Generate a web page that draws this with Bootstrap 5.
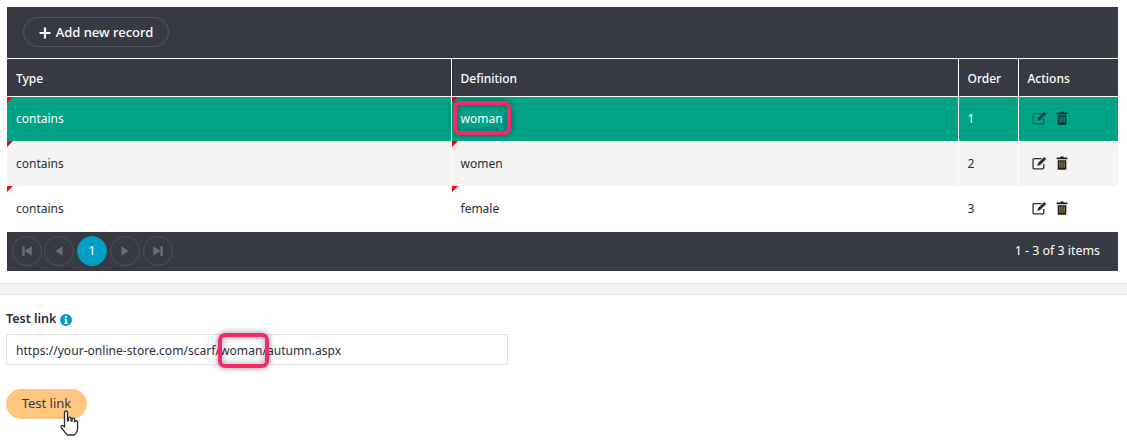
<!DOCTYPE html>
<html lang="en">
<head>
<meta charset="utf-8">
<title>Test link</title>
<link rel="stylesheet" href="https://cdn.jsdelivr.net/npm/bootstrap@5.3.0/dist/css/bootstrap.min.css">
<style>
html,body{height:442px;overflow:hidden;background:#fff}
body{font-family:"Noto Sans","Open Sans",sans-serif;font-size:12px;color:#2b2e36;position:relative}
.grid-wrap{margin:7px 9px 0 7px}
.grid-top{background:#373a42;height:51px;padding:10px 16px}
.add-btn{height:30px;width:146px;border:1px solid #54575e;border-radius:15px;color:#fff;font-size:13px;font-weight:500;padding:2px 0 0;background:transparent;display:flex;align-items:center;justify-content:center;gap:5px}
.grid-table{table-layout:fixed;width:100%;margin:0;border-collapse:collapse}
.grid-table th,.grid-table td{padding:0 0 0 9px;font-size:12px;vertical-align:middle;border:0;border-left:1px solid #fff;position:relative;box-shadow:none}
.grid-table th:first-child,.grid-table td:first-child{border-left:0}
.grid-table th{background:#373a42;color:#fff;font-weight:500;height:38px;padding-top:3px;border-top:1px solid #fff;border-bottom:1px solid #fff}
.grid-table td{height:45px;padding-top:1px;color:#2b2e36;background:#fff}
.grid-table tr.row-on td{background:#00a386;color:#fff;height:44px;padding-top:0}
.grid-table tr.row-alt td{background:#f4f4f4}
.dirty::before{content:"";position:absolute;left:0;top:0;border-style:solid;border-width:6px 6px 0 0;border-color:#f00 transparent transparent transparent}
.act-cell{display:flex;gap:8px;padding-left:4px;align-items:center;margin-top:-2px}
.grid-pager{background:#373a42;height:39px;margin-top:1px;padding:0 18px 0 5px;display:flex;align-items:center;justify-content:space-between;color:#fff;font-size:12.4px}
.pg-dot{width:30px;height:30px;border-radius:50%;border:1px solid #4e5158;display:flex;align-items:center;justify-content:center;color:#fff;font-size:13px;flex:none}
.pg-dot.pg-on{background:#00a0c6;border-color:#00a0c6}
.pg-row{display:flex;gap:3px}
.pg-row .pg-dot:first-child{margin-right:-1px}
.band{height:12px;background:#f4f4f4;border-top:1px solid #e6e6e6;border-bottom:1px solid #e6e6e6;margin-top:12px}
.form-zone{padding:16px 6px 0}
.lbl{font-size:12.5px;font-weight:600;display:flex;align-items:center;gap:4px;height:18px;margin-bottom:5px;color:#2b2e36}
.url-box{width:502px;height:31px;border:1px solid #e2e2e2;border-radius:0;font-size:12.1px;padding:2px 9px 0;color:#2b2e36;box-shadow:none}
.go-btn{margin-top:24px;width:81px;height:30px;border-radius:15px;background:#ffc680;border:0;font-size:13px;color:#373a42;padding:0}
.mark-box{position:absolute;border:4px solid #f5286a;border-radius:7px;box-shadow:0 0 6px rgba(0,0,0,.45),inset 0 0 7px rgba(0,0,0,.35)}
.mark-a{left:453px;top:101px;width:58px;height:34px}
.mark-b{left:218px;top:333px;width:51px;height:35px}
.hand{position:absolute;left:60px;top:410px}
</style>
</head>
<body>
<div class="grid-wrap">
  <div class="grid-top">
    <button type="button" class="btn add-btn"><svg width="12" height="12" viewBox="0 0 12 12"><path d="M6 .5v11M.5 6h11" stroke="#fff" stroke-width="2.200"/></svg>Add new record</button>
  </div>
  <table class="table grid-table">
    <colgroup><col style="width:444px"><col style="width:507px"><col style="width:60px"><col></colgroup>
    <thead><tr><th>Type</th><th>Definition</th><th>Order</th><th>Actions</th></tr></thead>
    <tbody>
      <tr class="row-on"><td class="dirty">contains</td><td class="dirty">woman</td><td>1</td><td><div class="act-cell">
        <svg width="16" height="14" viewBox="0 0 15 13"><path d="M11 7.500V11a1 1 0 0 1-1 1H2a1 1 0 0 1-1-1V3.500a1 1 0 0 1 1-1h7" fill="none" stroke="#0a6b50" stroke-width="1.200"/><path d="M5 9l.6-2.400L11.500 .8l1.900 1.900L7.400 8.500z" fill="#1d3a38"/></svg>
        <svg width="12" height="14" viewBox="0 0 11 13"><path d="M4 .5h3v1h3.500v1.500H.5V1.500H4zM1.500 4h8v8a.8.8 0 0 1-.8.8H2.300a.8.8 0 0 1-.8-.8z" fill="#10302e"/><path d="M3.500 5v6M5.500 5v6M7.500 5v6" stroke="#00a386"/></svg>
      </div></td></tr>
      <tr class="row-alt"><td class="dirty">contains</td><td class="dirty">women</td><td>2</td><td><div class="act-cell">
        <svg width="16" height="14" viewBox="0 0 15 13"><path d="M11 7.500V11a1 1 0 0 1-1 1H2a1 1 0 0 1-1-1V3.500a1 1 0 0 1 1-1h7" fill="none" stroke="#2b2e36" stroke-width="1.200"/><path d="M5 9l.6-2.400L11.500 .8l1.900 1.900L7.400 8.500z" fill="#2b2e36"/></svg>
        <svg width="12" height="14" viewBox="0 0 11 13"><path d="M4 .5h3v1h3.500v1.500H.5V1.500H4zM1.500 4h8v8a.8.8 0 0 1-.8.8H2.300a.8.8 0 0 1-.8-.8z" fill="#1b1d22"/><path d="M3.500 5v6M5.500 5v6M7.500 5v6" stroke="#b08a55"/></svg>
      </div></td></tr>
      <tr><td class="dirty">contains</td><td class="dirty">female</td><td>3</td><td><div class="act-cell">
        <svg width="16" height="14" viewBox="0 0 15 13"><path d="M11 7.500V11a1 1 0 0 1-1 1H2a1 1 0 0 1-1-1V3.500a1 1 0 0 1 1-1h7" fill="none" stroke="#2b2e36" stroke-width="1.200"/><path d="M5 9l.6-2.400L11.500 .8l1.900 1.900L7.400 8.500z" fill="#2b2e36"/></svg>
        <svg width="12" height="14" viewBox="0 0 11 13"><path d="M4 .5h3v1h3.500v1.500H.5V1.500H4zM1.500 4h8v8a.8.8 0 0 1-.8.8H2.300a.8.8 0 0 1-.8-.8z" fill="#1b1d22"/><path d="M3.500 5v6M5.500 5v6M7.500 5v6" stroke="#b08a55"/></svg>
      </div></td></tr>
    </tbody>
  </table>
  <div class="grid-pager">
    <div class="pg-row">
      <span class="pg-dot"><svg width="12" height="12" viewBox="0 0 10 10"><path d="M1 1h2v8H1zM9 1v8L3 5z" fill="#6b6e74"/></svg></span>
      <span class="pg-dot"><svg width="12" height="12" viewBox="0 0 10 10"><path d="M8 1v8L2 5z" fill="#6b6e74"/></svg></span>
      <span class="pg-dot pg-on">1</span>
      <span class="pg-dot"><svg width="12" height="12" viewBox="0 0 10 10"><path d="M2 1v8l6-4z" fill="#6b6e74"/></svg></span>
      <span class="pg-dot"><svg width="12" height="12" viewBox="0 0 10 10"><path d="M7 1h2v8H7zM1 1v8l6-4z" fill="#6b6e74"/></svg></span>
    </div>
    <span>1 - 3 of 3 items</span>
  </div>
</div>
<div class="band"></div>
<div class="form-zone">
  <div class="lbl">Test link <svg width="12" height="12" viewBox="0 0 12 12"><circle cx="6" cy="6" r="6" fill="#00a0c6"/><path d="M5 2.200h2v1.800H5zM4.500 5h2.500v3.800h.8V10H4.300V8.800h.9V6.200h-.7z" fill="#fff"/></svg></div>
  <input type="text" class="form-control url-box" value="https://your-online-store.com/scarf/woman/autumn.aspx" aria-label="Test link">
  <button type="button" class="btn go-btn d-block">Test link</button>
</div>
<div class="mark-box mark-a"></div>
<div class="mark-box mark-b"></div>
<svg class="hand" width="20" height="28" viewBox="0 0 20 28"><path d="M4.500 2.500a1.500 1.500 0 0 1 3 0V11l1-.3V8.500a1.300 1.300 0 0 1 2.600 0v2.700l.9 0V9.500a1.300 1.300 0 0 1 2.600 0v2l.7 0a1.200 1.200 0 0 1 2.300.5v6c0 3-2 6-3.500 7H7.500C5 23 3 19.500 1.300 17.500c-.8-1.500.6-2.800 2-1.800l1.200 1.300z" fill="#fff" stroke="#2b2e36" stroke-width="1.300" stroke-linejoin="round"/></svg>
<script src="https://cdn.jsdelivr.net/npm/bootstrap@5.3.0/dist/js/bootstrap.bundle.min.js"></script>
</body>
</html>
